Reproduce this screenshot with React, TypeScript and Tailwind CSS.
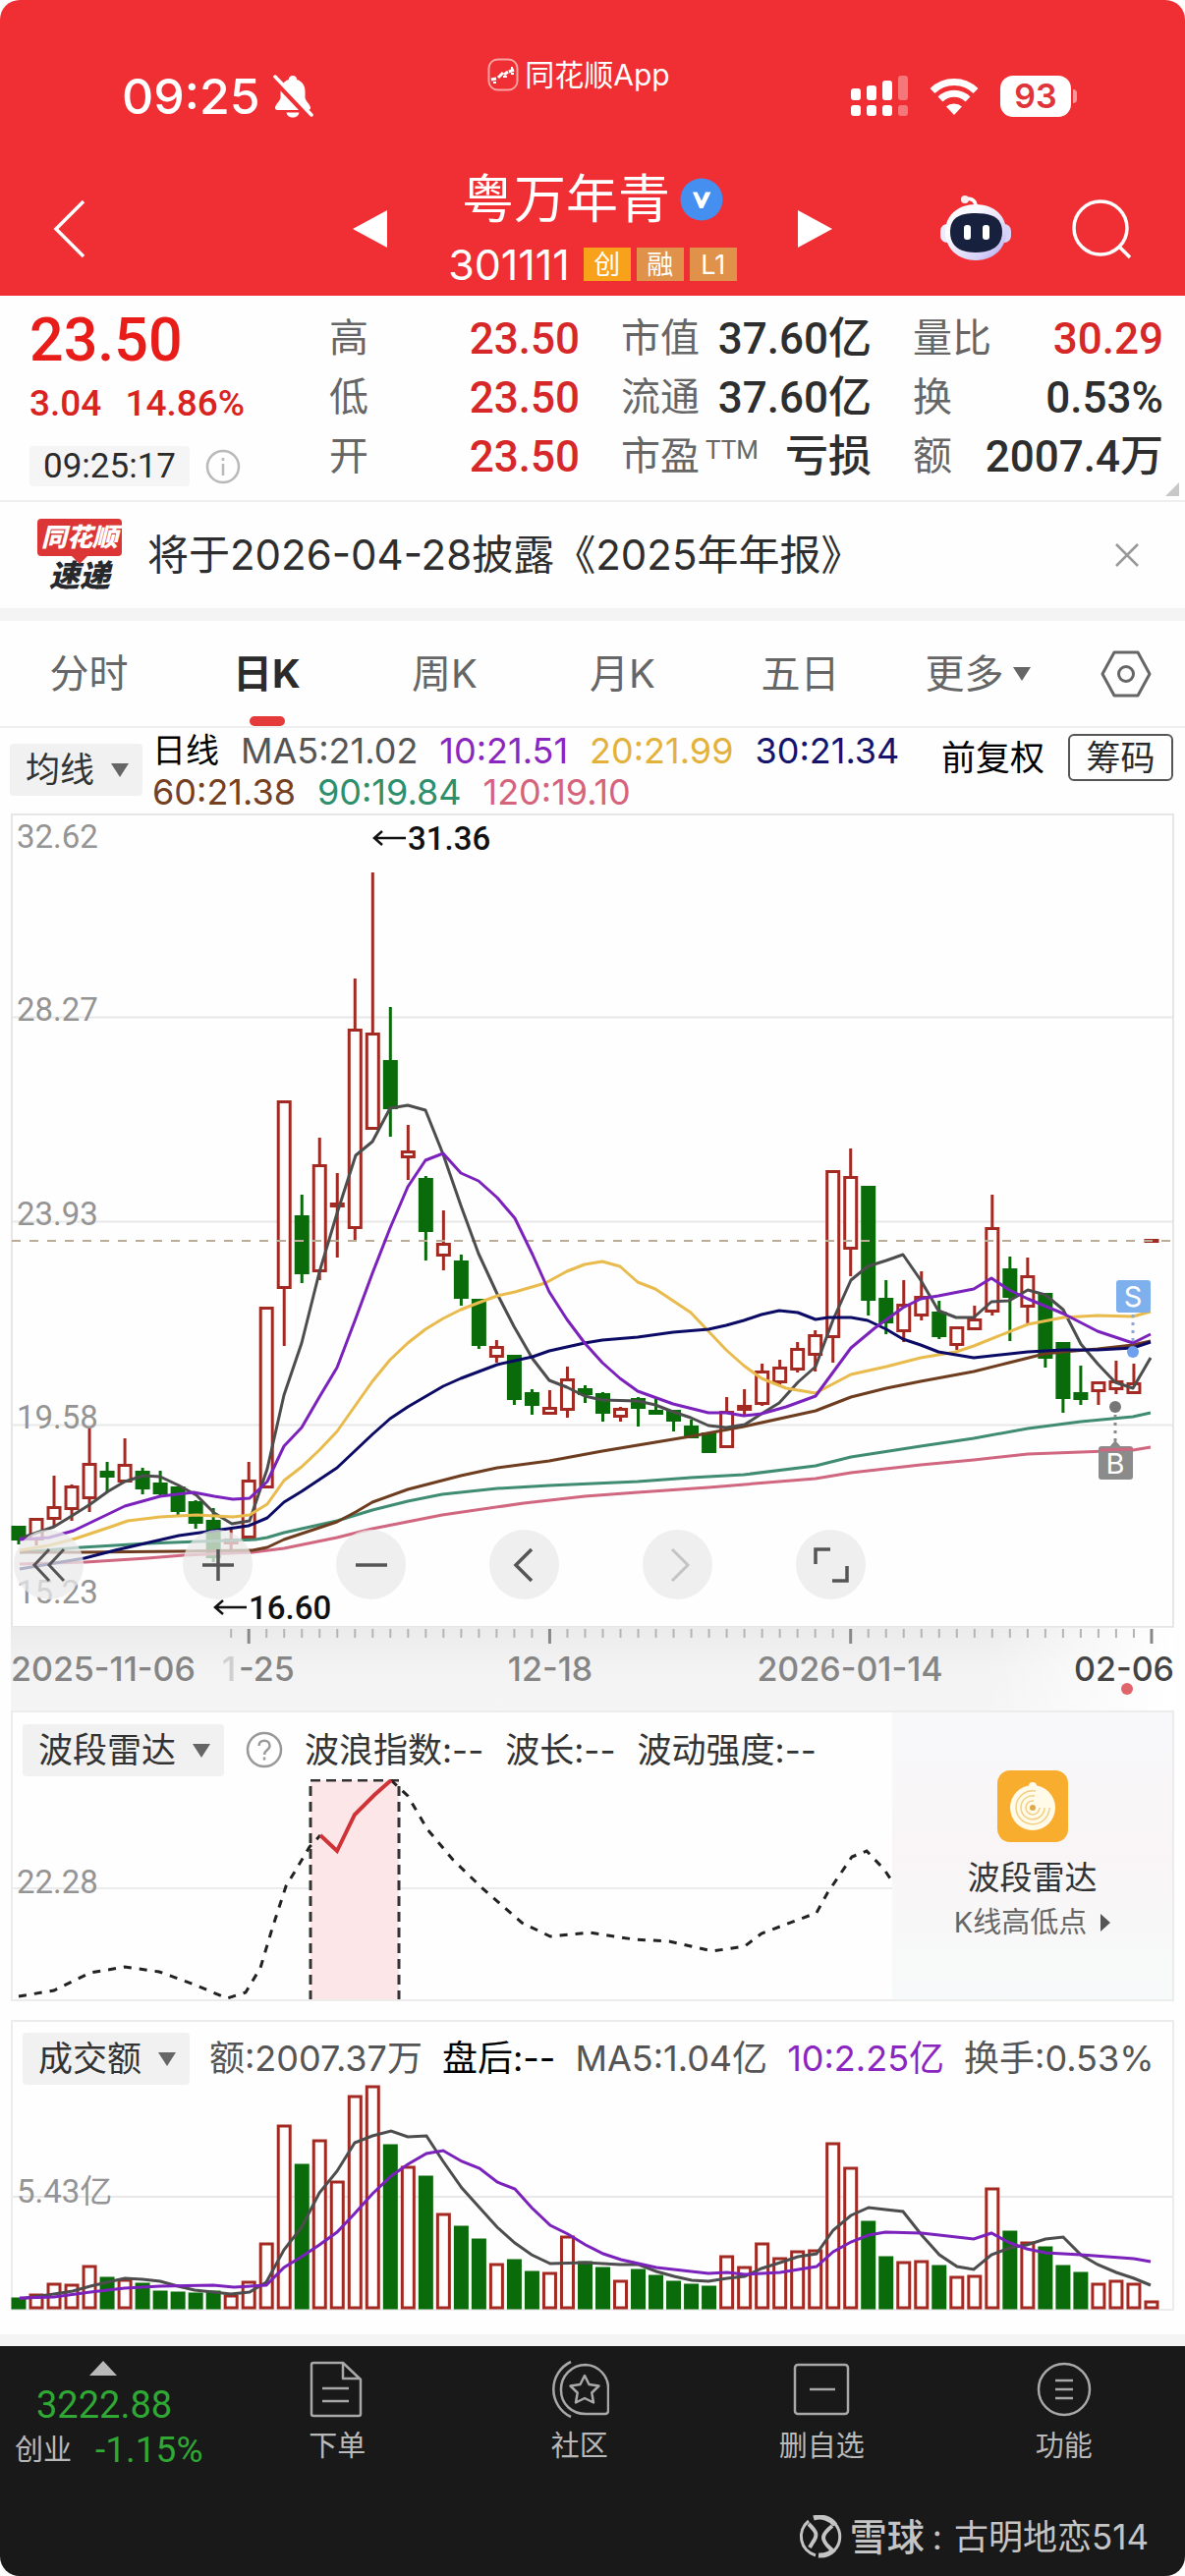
import { type ReactNode } from "react";

type Candle = {
  up: boolean;
  top: number;
  bottom: number;
  high: number;
  low: number;
};

const RED = "#a32a22";
const GREEN = "#0a6b0a";
const FIRST_X = 19;
const STEP = 18.015;

const slotX = (index: number) => FIRST_X + index * STEP;

function candle(kind: "r" | "g", top: number, bottom: number, high = top, low = bottom): Candle {
  return { up: kind === "r", top, bottom, high, low };
}

const candles: Candle[] = [
  candle("g", 1554, 1567, 1554, 1572),
  candle("r", 1546, 1567, 1546, 1573),
  candle("r", 1534, 1546, 1502, 1554),
  candle("r", 1513, 1536, 1511, 1548),
  candle("r", 1490, 1525, 1453, 1539),
  candle("g", 1498, 1503, 1488, 1518),
  candle("r", 1491, 1508, 1464, 1508),
  candle("g", 1498, 1515, 1494, 1521),
  candle("g", 1510, 1520, 1497, 1523),
  candle("g", 1514, 1538, 1514, 1542),
  candle("g", 1529, 1550, 1527, 1556),
  candle("g", 1548, 1585, 1535, 1590),
  candle("r", 1567, 1571, 1557, 1578),
  candle("r", 1507, 1565, 1488, 1565),
  candle("r", 1331, 1514),
  candle("r", 1121, 1311, 1121, 1370),
  candle("g", 1238, 1296, 1216, 1306),
  candle("r", 1186, 1294, 1158, 1303),
  candle("r", 1225, 1228, 1194, 1280),
  candle("r", 1048, 1250, 996, 1263),
  candle("r", 1052, 1149, 888, 1149),
  candle("g", 1080, 1128, 1025, 1157),
  candle("r", 1172, 1178, 1145, 1201),
  candle("g", 1200, 1253, 1197, 1283),
  candle("r", 1266, 1278, 1232, 1293),
  candle("g", 1284, 1321, 1277, 1329),
  candle("g", 1323, 1369, 1323, 1373),
  candle("r", 1371, 1381, 1364, 1387),
  candle("g", 1380, 1424, 1380, 1430),
  candle("g", 1418, 1430, 1414, 1440),
  candle("r", 1433, 1439, 1415, 1439),
  candle("r", 1404, 1435, 1391, 1443),
  candle("g", 1414, 1419, 1410, 1428),
  candle("g", 1419, 1438, 1417, 1447),
  candle("r", 1434, 1442, 1432, 1447),
  candle("g", 1424, 1433, 1422, 1452),
  candle("g", 1436, 1439, 1423, 1440),
  candle("g", 1436, 1446, 1436, 1457),
  candle("g", 1452, 1463, 1445, 1463),
  candle("g", 1459, 1478),
  candle("r", 1437, 1473, 1422, 1473),
  candle("r", 1431, 1435, 1414, 1440),
  candle("r", 1396, 1429, 1388, 1431),
  candle("r", 1392, 1407, 1384, 1409),
  candle("r", 1373, 1394, 1366, 1397),
  candle("r", 1359, 1379, 1354, 1396),
  candle("r", 1192, 1361, 1192, 1387),
  candle("r", 1198, 1271, 1169, 1299),
  candle("g", 1208, 1323, 1208, 1339),
  candle("g", 1322, 1346, 1303, 1358),
  candle("r", 1328, 1355, 1303, 1366),
  candle("r", 1320, 1339, 1294, 1344),
  candle("g", 1336, 1360, 1324, 1363),
  candle("r", 1351, 1369, 1351, 1374),
  candle("r", 1343, 1353, 1329, 1353),
  candle("r", 1250, 1335, 1216, 1339),
  candle("g", 1292, 1320, 1279, 1365),
  candle("r", 1299, 1330, 1280, 1348),
  candle("g", 1317, 1382, 1317, 1392),
  candle("g", 1367, 1423, 1366, 1438),
  candle("g", 1418, 1424, 1390, 1430),
  candle("r", 1407, 1416, 1407, 1430),
  candle("r", 1406, 1414, 1385, 1419),
  candle("r", 1408, 1418, 1388, 1418),
  candle("r", 1262, 1264),
];

const averages = [
  {
    color: "#d0667f",
    points:
      "20,1592 87,1590 150,1586 187,1583 257,1580 289,1576 343,1565 379,1556 450,1542 533,1530 595,1523 649,1519 721,1514 830,1505 866,1499 937,1491 991,1486 1046,1480 1100,1478 1153,1476 1171,1473",
  },
  {
    color: "#3f8c72",
    points:
      "20,1580 83,1575 150,1571 203,1569 260,1567 272,1565 289,1560 343,1548 379,1537 415,1528 450,1521 506,1515 559,1512 649,1508 703,1504 757,1501 830,1492 866,1483 937,1472 991,1464 1046,1454 1100,1447 1153,1442 1171,1438",
  },
  {
    color: "#6e3c1e",
    points:
      "20,1580 83,1580 182,1579 257,1578 272,1575 289,1567 307,1561 343,1549 362,1539 379,1529 415,1516 469,1502 506,1494 559,1487 613,1477 667,1468 703,1462 757,1452 830,1436 866,1422 902,1413 937,1406 991,1396 1027,1387 1063,1378 1082,1376 1117,1373 1153,1369 1171,1365",
  },
  {
    color: "#4d4d4d",
    points:
      "20,1566 55,1554 73,1543 92,1531 110,1518 127,1508 146,1502 163,1503 182,1512 200,1522 218,1540 236,1551 254,1548 272,1495 289,1420 307,1367 325,1295 343,1235 362,1176 379,1162 397,1128 415,1125 433,1130 451,1175 469,1227 487,1276 506,1317 523,1350 542,1383 559,1405 577,1412 595,1421 613,1425 649,1426 667,1430 685,1437 703,1443 721,1451 739,1453 758,1450 775,1439 793,1428 812,1407 830,1391 848,1343 866,1303 883,1289 902,1283 919,1277 937,1303 955,1334 973,1341 991,1341 1009,1325 1027,1324 1046,1313 1064,1318 1082,1333 1100,1368 1117,1388 1135,1407 1153,1413 1171,1382",
  },
  {
    color: "#e8bb4c",
    points:
      "20,1578 50,1573 77,1566 113,1554 130,1548 163,1544 200,1542 237,1544 254,1542 272,1531 289,1507 307,1493 325,1476 343,1457 379,1406 397,1384 415,1367 433,1353 451,1342 469,1333 487,1326 506,1319 524,1315 555,1306 577,1294 595,1287 613,1284 631,1289 649,1305 667,1312 703,1336 721,1355 739,1374 757,1390 775,1403 800,1413 830,1418 866,1399 902,1391 937,1382 973,1376 991,1370 1046,1348 1082,1341 1117,1339 1153,1340 1171,1335",
  },
  {
    color: "#0b0b66",
    points:
      "20,1597 86,1586 117,1578 143,1572 182,1563 218,1558 253,1553 272,1545 289,1529 307,1518 325,1506 343,1494 379,1460 397,1444 415,1432 451,1411 469,1403 506,1389 542,1381 559,1375 577,1371 595,1367 613,1364 649,1361 685,1356 721,1353 739,1349 757,1344 775,1338 793,1334 812,1336 830,1343 843,1341 866,1341 883,1344 902,1353 919,1363 937,1369 955,1376 991,1382 1046,1376 1082,1374 1117,1374 1153,1372 1171,1366",
  },
  {
    color: "#7a22bb",
    points:
      "20,1567 50,1565 75,1558 100,1546 127,1533 163,1523 197,1519 218,1523 237,1526 254,1525 272,1508 289,1472 307,1453 325,1422 343,1392 362,1342 379,1296 397,1250 415,1208 433,1181 451,1174 469,1194 487,1202 506,1219 524,1240 542,1277 559,1315 577,1343 595,1367 613,1387 631,1403 649,1416 685,1429 721,1438 739,1438 757,1441 775,1439 800,1432 830,1421 866,1372 890,1352 919,1331 937,1322 955,1319 991,1312 1009,1301 1027,1313 1046,1322 1082,1337 1117,1355 1153,1367 1171,1358",
  },
];

const priceLabels = [
  { text: "32.62", y: 863 },
  { text: "28.27", y: 1039 },
  { text: "23.93", y: 1247 },
  { text: "19.58", y: 1454 },
  { text: "15.23", y: 1632 },
];

const volumeTops = [
  2340, 2336, 2325, 2326, 2307, 2319, 2321, 2325, 2333, 2334, 2335, 2333, 2337, 2323, 2284, 2164,
  2204, 2179, 2221, 2134, 2124, 2184, 2206, 2216, 2254, 2267, 2280, 2305, 2301, 2313, 2314, 2277,
  2303, 2309, 2322, 2311, 2317, 2323, 2326, 2328, 2297, 2308, 2284, 2299, 2292, 2291, 2182, 2207,
  2262, 2298, 2303, 2302, 2307, 2318, 2317, 2228, 2272, 2283, 2288, 2307, 2314, 2325, 2322, 2325,
  2343,
];

const volumeMa5 =
  "20,2340 55,2335 74,2332 92,2327 109,2323 127,2319 145,2320 163,2322 181,2327 198,2331 217,2333 235,2335 254,2333 271,2323 289,2290 307,2267 325,2232 343,2210 361,2181 379,2174 398,2169 415,2175 434,2174 451,2200 470,2227 488,2247 506,2267 524,2283 541,2295 560,2304 596,2303 631,2305 650,2305 668,2312 686,2317 704,2321 721,2322 740,2319 758,2317 775,2309 794,2303 812,2297 831,2294 848,2270 866,2255 884,2247 901,2249 919,2251 938,2275 956,2295 974,2307 991,2310 1009,2295 1028,2288 1045,2285 1064,2279 1082,2277 1100,2295 1117,2305 1136,2313 1154,2319 1171,2326";

const volumeMa10 =
  "20,2339 55,2338 92,2333 127,2329 163,2327 217,2326 238,2328 271,2326 289,2308 307,2297 325,2285 343,2272 361,2253 379,2233 398,2215 415,2203 434,2192 451,2189 470,2200 488,2207 506,2221 524,2228 541,2247 560,2265 578,2274 596,2285 614,2294 632,2300 668,2308 721,2314 740,2313 758,2315 794,2313 831,2307 848,2292 866,2282 884,2275 901,2272 938,2273 956,2275 991,2279 1009,2273 1028,2283 1045,2289 1064,2293 1100,2295 1154,2299 1171,2302";

const quotes = [
  [
    { label: "高", value: "23.50", red: true },
    { label: "低", value: "23.50", red: true },
    { label: "开", value: "23.50", red: true },
  ],
  [
    { label: "市值", value: "37.60亿" },
    { label: "流通", value: "37.60亿" },
    { label: "市盈", sup: "TTM", value: "亏损" },
  ],
  [
    { label: "量比", value: "30.29", red: true },
    { label: "换", value: "0.53%" },
    { label: "额", value: "2007.4万" },
  ],
];

const tabs = ["分时", "日K", "周K", "月K", "五日"];

function StatusBar() {
  return (
    <div className="grid grid-cols-[1fr_auto_1fr] pt-[54px]">
      <div className="flex h-[66px] items-center gap-3 pt-[22px] pl-[124px]">
        <span className="text-[50px] leading-[44px] font-medium">09:25</span>
        <svg viewBox="0 0 42 44" className="h-11 w-[42px]" aria-hidden="true">
          <path
            d="M21 1c-2.600 0-4.200 1.700-4.200 4C11 7 8.500 11.500 8.500 17v6c0 4-5.500 7-5.500 11 0 1.300 1 2 2.300 2h31.400c1.300 0 2.300-.700 2.300-2 0-4-5.500-7-5.500-11v-6c0-5.500-2.500-10-8.300-12 0-2.300-1.600-4-4.200-4zM14.500 38.500h13c-.5 3-3 5-6.500 5s-6-2-6.500-5z"
            fill="#fff"
          />
          <path d="M1 5l37 39" stroke="#f02f34" strokeWidth="5" />
          <path d="M3 2l37 39" stroke="#fff" strokeWidth="3.500" strokeLinecap="round" />
        </svg>
      </div>
      <div className="flex h-11 items-center gap-1.5 pr-7 text-[30px] leading-none">
        <svg viewBox="0 0 32 34" className="h-[34px] w-8" fill="none" aria-hidden="true">
          <rect x="1.500" y="1.500" width="29" height="31" rx="9" stroke="#f9a3a3" strokeWidth="2" />
          <path d="M4 22l5-1M11 20l5-5M17 17l4-3M22 14l5-2" stroke="#fff" strokeWidth="3" />
          <path d="M6 25h3M16 19h4M24 16h3M25 9v3" stroke="#fff" strokeWidth="2" />
        </svg>
        <span>同花顺App</span>
      </div>
      <div className="flex h-[66px] items-center justify-end gap-[22px] pt-[22px] pr-[110px]">
        <svg viewBox="0 0 58 42" className="h-[42px] w-[58px]" fill="#fff" aria-hidden="true">
          <rect x="0" y="13" width="10" height="12" rx="3" />
          <rect x="16" y="10" width="10" height="15" rx="3" />
          <rect x="32" y="5" width="10" height="20" rx="3" />
          <rect x="48" y="0" width="10" height="25" rx="3" opacity=".35" />
          <rect x="0" y="30" width="10" height="11" rx="3" />
          <rect x="16" y="30" width="10" height="11" rx="3" />
          <rect x="32" y="30" width="10" height="11" rx="3" />
          <rect x="48" y="30" width="10" height="11" rx="3" opacity=".35" />
        </svg>
        <svg viewBox="0 0 50 38" className="h-[38px] w-[50px]" fill="none" aria-hidden="true">
          <path d="M3 13.500a31.500 31.500 0 0 1 44 0" stroke="#fff" strokeWidth="7" />
          <path d="M11 22a20 20 0 0 1 28 0" stroke="#fff" strokeWidth="7" />
          <path d="M25 38l-8-8.500a12 12 0 0 1 16 0z" fill="#fff" />
        </svg>
        <div className="flex items-center gap-0.5">
          <span className="flex h-[42px] w-[72px] items-center justify-center rounded-[13px] bg-white text-[34px] leading-none font-semibold text-[#e0343a]">
            93
          </span>
          <span className="h-3.5 w-1 rounded-r-full bg-white/50" />
        </div>
      </div>
    </div>
  );
}

function StockHeader() {
  return (
    <header className="bg-[#f02f34] pb-[11px] text-white">
      <StatusBar />
      <div className="grid grid-cols-[1fr_auto_1fr] items-center pt-12">
        <div className="flex pt-2 pl-[54px]">
          <button type="button" aria-label="返回">
            <svg viewBox="0 0 34 60" className="h-[60px] w-[34px]" fill="none" stroke="#fff">
              <path d="M31 2L3 30l28 28" strokeWidth="3.500" />
            </svg>
          </button>
        </div>
        <div className="flex w-[488px] items-center justify-between">
          <button type="button" aria-label="上一只" className="pt-2">
            <svg viewBox="0 0 35 38" className="h-[38px] w-[35px]" fill="#fff">
              <path d="M0 19L35 0v38z" />
            </svg>
          </button>
          <div className="flex flex-col items-center gap-2.5">
            <h1 className="flex h-[70px] items-center gap-2.5 text-[53px] leading-none">
              粤万年青
              <svg viewBox="0 0 44 44" className="size-11" aria-hidden="true">
                <circle cx="22" cy="22" r="21.500" fill="#448ff0" />
                <path d="M13 14.500h4.500l4.500 9 4-9h5.500L23.500 31h-3.500z" fill="#fff" />
              </svg>
            </h1>
            <div className="flex h-[42px] items-center gap-1.5 text-[27px] leading-none">
              <span className="mr-2 text-[43px] leading-none">301111</span>
              <span className="flex h-[34px] w-12 items-center justify-center bg-[#f8a11b]">创</span>
              <span className="flex h-[34px] w-12 items-center justify-center bg-[#e0924a]">融</span>
              <span className="flex h-[34px] w-12 items-center justify-center bg-[#e0924a]">L1</span>
            </div>
          </div>
          <button type="button" aria-label="下一只" className="pt-2">
            <svg viewBox="0 0 35 38" className="h-[38px] w-[35px]" fill="#fff">
              <path d="M35 19L0 0v38z" />
            </svg>
          </button>
        </div>
        <div className="flex items-center justify-end gap-[62px] pt-2 pr-[55px]">
          <button type="button" aria-label="智能助手">
            <svg viewBox="0 0 72 68" className="h-[68px] w-[72px]">
              <defs>
                <linearGradient id="shell" x1="0" y1="0" x2="1" y2="1">
                  <stop offset=".3" stopColor="#fbfaff" />
                  <stop offset=".75" stopColor="#d5d0f8" />
                  <stop offset="1" stopColor="#a9a2ee" />
                </linearGradient>
              </defs>
              <path d="M36 11c0-5-3-8-10-8" fill="none" stroke="#fff" strokeWidth="3.500" />
              <circle cx="25" cy="4" r="4" fill="#fbeef2" />
              <rect x="0" y="29" width="14" height="19" rx="7" fill="#efecff" />
              <rect x="58" y="29" width="14" height="19" rx="7" fill="#d8d3fa" />
              <path
                d="M36 9c18 0 31 11 31 28S54 66 36 66 5 54 5 37 18 9 36 9z"
                fill="url(#shell)"
              />
              <path
                d="M36 18c17 0 27 5 27 19S53 58 36 58 10 51 10 37s9-19 26-19z"
                fill="#17203c"
              />
              <rect x="24" y="30" width="7" height="15" rx="3" fill="#fff" />
              <rect x="43" y="30" width="7" height="15" rx="3" fill="#fff" />
            </svg>
          </button>
          <button type="button" aria-label="搜索">
            <svg viewBox="0 0 60 62" className="h-[62px] w-[60px]" fill="none" stroke="#fff">
              <circle cx="29" cy="30" r="27" strokeWidth="3.500" />
              <path d="M48 49l11 11" strokeWidth="3.500" />
            </svg>
          </button>
        </div>
      </div>
    </header>
  );
}

function QuotePanel() {
  return (
    <section className="relative flex border-b-2 border-[#eeeeee] pt-3.5 pr-[22px] pb-3.5 pl-[30px] font-[Roboto,'Noto_Sans_CJK_SC',sans-serif]">
      <div className="w-[305px] text-[#d9231f]">
        <p className="text-[61px] leading-[62px] font-medium text-[#e81c19]">23.50</p>
        <p className="mt-2 flex gap-6 text-[37px] leading-[52px] font-medium">
          <span>3.04</span>
          <span>14.86%</span>
        </p>
        <div className="mt-[17px] flex items-center gap-4">
          <span className="flex h-[41px] items-center rounded-sm bg-[#f5f5f5] px-3.5 text-[35px] leading-none text-[#2b2b2b]">
            09:25:17
          </span>
          <svg viewBox="0 0 36 36" className="size-9" fill="none" stroke="#b9b9b9" aria-hidden="true">
            <circle cx="18" cy="18" r="16" strokeWidth="2.500" />
            <path d="M18 9v3M18 15v12" strokeWidth="2.500" />
          </svg>
        </div>
      </div>
      <div className="grid flex-1 grid-cols-3 gap-[42px]">
        {quotes.map((column, index) => (
          <dl key={index}>
            {column.map((item) => (
              <div key={item.label} className="flex h-[60px] items-center justify-between">
                <dt className="flex text-[40px] leading-[60px] text-[#666]">
                  {item.label}
                  {"sup" in item && (
                    <span className="ml-1.5 text-[26px] leading-[46px]">{item.sup}</span>
                  )}
                </dt>
                <dd
                  className={
                    "red" in item
                      ? "text-[44px] leading-[60px] font-medium text-[#d62828]"
                      : "text-[44px] leading-[60px] font-medium text-[#2e2e2e]"
                  }
                >
                  {item.value}
                </dd>
              </div>
            ))}
          </dl>
        ))}
      </div>
      <svg
        viewBox="0 0 14 14"
        className="absolute right-1.5 bottom-1 size-3.5"
        fill="#c8c8c8"
        aria-hidden="true"
      >
        <path d="M14 0v14H0z" />
      </svg>
    </section>
  );
}

function Notice() {
  return (
    <section className="flex h-[109px] items-center border-b border-[#f1f1f1] pr-[46px] pl-9">
      <div className="flex w-[90px] flex-col items-center italic">
        <span className="relative flex h-[38px] w-[86px] items-center justify-center rounded bg-[#dc3535] text-[26px] leading-none font-black text-white">
          同花顺
          <svg viewBox="0 0 16 8" className="absolute top-full h-2 w-4" fill="#dc3535">
            <path d="M0 0h16L8 8z" />
          </svg>
        </span>
        <span className="mt-1 text-[31px] leading-8 font-black text-[#26282c]">速递</span>
      </div>
      <p className="ml-6 flex-1 text-[42px] leading-none text-[#2e2e2e]">
        将于2026-04-28披露《2025年年报》
      </p>
      <button type="button" aria-label="关闭">
        <svg viewBox="0 0 26 26" className="size-[26px]" stroke="#999" strokeWidth="2.500">
          <path d="M2 2l22 22M24 2L2 24" />
        </svg>
      </button>
    </section>
  );
}

function Tabs() {
  return (
    <nav className="grid h-[109px] grid-cols-[repeat(6,minmax(0,181fr))_120fr] border-b-2 border-[#eeeeee] text-[40px] leading-none text-[#666]">
      {tabs.map((tab) =>
        tab === "日K" ? (
          <button
            key={tab}
            type="button"
            aria-current="page"
            className="relative flex items-center justify-center font-bold text-[#2b2b2b]"
          >
            {tab}
            <span className="absolute bottom-0 h-2.5 w-9 rounded-full bg-[#e53a3a]" />
          </button>
        ) : (
          <button key={tab} type="button" className="flex items-center justify-center">
            {tab}
          </button>
        ),
      )}
      <button type="button" className="flex items-center justify-center gap-2">
        更多
        <svg viewBox="0 0 20 14" className="h-3.5 w-5" fill="#666" aria-hidden="true">
          <path d="M1 0h18L10 14z" />
        </svg>
      </button>
      <button type="button" aria-label="设置" className="flex items-center justify-center">
        <svg viewBox="0 0 52 48" className="h-12 w-[52px]" fill="none" stroke="#666" strokeWidth="3">
          <path d="M14 2h24l12 22-12 22H14L2 24z" strokeLinejoin="round" />
          <circle cx="26" cy="24" r="7.500" />
        </svg>
      </button>
    </nav>
  );
}

function IndicatorSelect({ name, value }: { name: string; value: string }) {
  return (
    <div className="relative shrink-0 rounded-sm bg-[#f1f1f1] text-[#333]">
      <select
        aria-label={name}
        defaultValue={value}
        className="block h-[53px] appearance-none bg-transparent pr-12 pl-4 text-[35px] leading-[53px]"
      >
        <option>{value}</option>
      </select>
      <svg
        viewBox="0 0 18 14"
        className="pointer-events-none absolute top-5 right-3.5 h-3.5 w-[18px]"
        fill="#666"
        aria-hidden="true"
      >
        <path d="M0 0h18L9 14z" />
      </svg>
    </div>
  );
}

function AverageLegend() {
  return (
    <section className="flex h-[87px] items-start pr-3 pl-2.5">
      <div className="pt-4">
        <IndicatorSelect name="主图指标" value="均线" />
      </div>
      <div className="ml-2.5 flex-1 pt-0.5 text-[36px] leading-[42px] whitespace-nowrap">
        <p className="flex gap-[22px]">
          <span className="text-[34px] text-black">日线</span>
          <span className="text-[#555]">MA5:21.02</span>
          <span className="text-[#8a25c0]">10:21.51</span>
          <span className="text-[#e3b13c]">20:21.99</span>
          <span className="text-[#14146e]">30:21.34</span>
        </p>
        <p className="flex gap-[22px]">
          <span className="text-[#74401f]">60:21.38</span>
          <span className="text-[#2d8f6c]">90:19.84</span>
          <span className="text-[#d5637c]">120:19.10</span>
        </p>
      </div>
      <button type="button" className="mt-1.5 h-12 text-[35px] leading-[48px] text-black">
        前复权
      </button>
      <button
        type="button"
        className="mt-1.5 ml-6 flex h-12 w-[107px] items-center justify-center rounded-md border-2 border-[#555] text-[35px] leading-none text-[#2b2b2b]"
      >
        筹码
      </button>
    </section>
  );
}

function ExtremeMark({ x, y, value }: { x: number; y: number; value: string }) {
  return (
    <g>
      <path
        d={`M${x + 33} ${y}H${x + 1}M${x + 9} ${y - 7}L${x + 1} ${y}l8 7`}
        fill="none"
        stroke="#111"
        strokeWidth="2.500"
      />
      <text x={x + 35} y={y + 12} fontSize="33" fontWeight="500" fill="#111">
        {value}
      </text>
    </g>
  );
}

function RoundButton({ label, children }: { label: string; children: ReactNode }) {
  return (
    <button
      type="button"
      aria-label={label}
      className="flex size-[71px] items-center justify-center rounded-full bg-[#e9e9e9]/75"
    >
      <svg viewBox="0 0 36 36" className="size-9" fill="none" stroke="#555" strokeWidth="3.500">
        {children}
      </svg>
    </button>
  );
}

function CandleChart() {
  return (
    <section className="relative">
      <svg viewBox="0 828 1206 915" className="block w-full" role="img" aria-label="日K线">
        <defs>
          <linearGradient id="axis" x1="0" y1="0" x2="0" y2="1">
            <stop offset="0" stopColor="#ebebeb" />
            <stop offset=".5" stopColor="#f3f3f3" />
            <stop offset="1" stopColor="#f5f5f5" />
          </linearGradient>
          <linearGradient id="axisFade">
            <stop offset="0" stopColor="#fff" stopOpacity="0" />
            <stop offset="1" stopColor="#fff" />
          </linearGradient>
        </defs>
        <rect x="12" y="829" width="1182" height="827" fill="none" stroke="#e6e6e6" strokeWidth="2" />
        <path d="M12 1035.500H1193M12 1243.500H1193M12 1450.500H1193" stroke="#e8e8e8" strokeWidth="2" />

        {candles.map((item, index) => {
          const x = slotX(index);
          const color = item.up ? RED : GREEN;
          return (
            <g key={index} stroke={color}>
              <path
                d={`M${x} ${item.high}V${item.top}M${x} ${item.bottom}V${item.low}`}
                strokeWidth="3"
              />
              <rect
                x={x - 6}
                y={item.top + 0.5}
                width="12"
                height={Math.max(item.bottom - item.top - 1, 1)}
                fill={item.up ? "#fff" : color}
                strokeWidth="3"
              />
            </g>
          );
        })}

        <path d="M12 1263H1193" stroke="#b9ad98" strokeWidth="2" strokeDasharray="9 9" />
        {averages.map((line) => (
          <polyline
            key={line.color}
            points={line.points}
            fill="none"
            stroke={line.color}
            strokeWidth="3"
            strokeLinejoin="round"
          />
        ))}

        <g fontFamily="Inter, sans-serif">
          <path d="M1153 1338v32" stroke="#8ea6d0" strokeWidth="3" strokeDasharray="3 5" />
          <circle cx="1153" cy="1376" r="6" fill="#6ea0ee" />
          <rect x="1136" y="1303" width="35" height="33" rx="3" fill="#7fb0ee" />
          <text x="1153" y="1330" fontSize="29" textAnchor="middle" fill="#fff">
            S
          </text>
          <circle cx="1135" cy="1432" r="6" fill="#777" />
          <path d="M1135 1440v28" stroke="#888" strokeWidth="3" strokeDasharray="3 5" />
          <path d="M1135 1466l6 7h-12z" fill="#888" />
          <rect x="1118" y="1472" width="35" height="34" rx="3" fill="#8b8b8b" />
          <path d="M1119 1476l34-1" stroke="#d0667f" strokeWidth="3" />
          <text x="1135" y="1500" fontSize="29" textAnchor="middle" fill="#fff">
            B
          </text>
        </g>

        <g fontFamily="Roboto, sans-serif">
          {priceLabels.map((label) => (
            <text key={label.text} x="17" y={label.y} fontSize="33" fill="#949494">
              {label.text}
            </text>
          ))}
          <ExtremeMark x={380} y={853} value="31.36" />
          <ExtremeMark x={218} y={1636} value="16.60" />
        </g>

        <rect x="11" y="1656" width="1184" height="85" fill="url(#axis)" />
        <rect x="1000" y="1657" width="195" height="85" fill="url(#axisFade)" />
        <path d="M11 1742H1195" stroke="#ececec" strokeWidth="2" />
        {candles.map((_, index) => {
          if (index < 12) return null;
          const long = index % 17 === 13;
          return (
            <path
              key={index}
              d={`M${slotX(index)} 1658v${long ? 15 : 9}`}
              stroke={long ? "#888" : "#b5b5b5"}
              strokeWidth={long ? 3 : 2}
            />
          );
        })}
        <g fontSize="34" fontWeight="500" fill="#858585">
          <text x="11" y="1711">
            2025-11-06
          </text>
          <text x="226" y="1711" fill="#cfcfcf">
            1
          </text>
          <text x="243" y="1711">
            -25
          </text>
          <text x="560" y="1711" textAnchor="middle">
            12-18
          </text>
          <text x="865" y="1711" textAnchor="middle">
            2026-01-14
          </text>
          <text x="1195" y="1711" textAnchor="end" fill="#444">
            02-06
          </text>
        </g>
        <circle cx="1147" cy="1719" r="6" fill="#e0656a" />
      </svg>
      <div className="absolute inset-x-0 bottom-[115px] flex gap-[85px] pl-3.5">
        <div className="mr-4">
          <RoundButton label="最早">
            <path d="M18 2L3 18l15 16M33 2L18 18l15 16" strokeWidth="3" />
          </RoundButton>
        </div>
        <RoundButton label="放大">
          <path d="M18 2v32M2 18h32" />
        </RoundButton>
        <RoundButton label="缩小">
          <path d="M2 18h32" />
        </RoundButton>
        <RoundButton label="左移">
          <path d="M25 2L9 18l16 16" />
        </RoundButton>
        <RoundButton label="右移">
          <path d="M12 2l16 16-16 16" stroke="#c4c4c4" strokeWidth="3" />
        </RoundButton>
        <RoundButton label="全屏">
          <path d="M2 17V2h15M34 19v15H19" />
        </RoundButton>
      </div>
    </section>
  );
}

function WavePanel() {
  return (
    <section className="mx-[11px] flex border-2 border-t-0 border-[#ececec]">
      <div className="min-w-0 flex-1">
        <div className="flex h-[68px] items-center gap-[22px] pt-2 pl-2.5 text-[35px] leading-none whitespace-nowrap text-[#333]">
          <IndicatorSelect name="副图指标一" value="波段雷达" />
          <svg viewBox="0 0 38 38" className="size-[38px] shrink-0" fill="none" stroke="#999" aria-hidden="true">
            <circle cx="19" cy="19" r="17" strokeWidth="2.500" />
            <path
              d="M13.500 15c0-7 11-7 11 0 0 4.500-5.500 4-5.500 9M19 26.500v3"
              strokeWidth="2.500"
            />
          </svg>
          <span>波浪指数:--</span>
          <span>波长:--</span>
          <span>波动强度:--</span>
        </div>
        <svg viewBox="13 1811 895 224" className="block w-full" role="img" aria-label="波段雷达">
          <path d="M13 1922H908" stroke="#ececec" strokeWidth="2" />
          <rect x="316" y="1812" width="90" height="226" fill="#fde6e8" />
          <path
            d="M316 2036V1812H406V2036"
            fill="none"
            stroke="#333"
            strokeWidth="3"
            strokeDasharray="10 6"
          />
          <g fill="none" stroke="#222" strokeWidth="3" strokeDasharray="8 8">
            <polyline points="19,2032 55,2026 92,2008 127,2002 162,2007 198,2020 231,2034 250,2028 265,2003 277,1963 291,1920 315,1880 326,1868" />
            <polyline points="398,1812 415,1828 435,1862 461,1893 492,1923 531,1957 560,1971 600,1967 645,1974 681,1976 725,1986 758,1981 775,1968 815,1953 831,1947 842,1927 867,1890 882,1884 900,1903 908,1915" />
          </g>
          <polyline
            points="326,1868 343,1884 361,1847 381,1827 398,1812"
            fill="none"
            stroke="#cf3338"
            strokeWidth="4"
          />
          <text x="17" y="1927" fontSize="33" fill="#949494" fontFamily="Roboto, sans-serif">
            22.28
          </text>
        </svg>
      </div>
      <a
        href="#radar"
        className="flex w-[285px] flex-col items-center bg-gradient-to-b from-[#f8f8fa] via-[#f9f5f6] to-[#f7fafa] pt-[59px]"
      >
        <svg viewBox="0 0 72 73" className="h-[73px] w-[72px]" aria-hidden="true">
          <rect width="72" height="73" rx="13" fill="#f9ad2e" />
          <circle cx="36" cy="38" r="23" fill="#fffbe8" />
          <circle cx="36" cy="16" r="4" fill="#fffbe8" />
          <g fill="none" stroke="#f3cf85" strokeWidth="1.500">
            <path d="M53 38a17 17 0 1 1-14-17" />
            <path d="M48 38a12 12 0 1 1-10-12" />
            <path d="M43 38a7 7 0 1 1-6-7" />
          </g>
          <circle cx="36" cy="38" r="3" fill="#e0a84a" />
        </svg>
        <span className="mt-[18px] text-[33px] leading-9 text-[#333]">波段雷达</span>
        <span className="mt-2.5 flex items-center gap-3.5 text-[29px] leading-9 text-[#666]">
          K线高低点
          <svg viewBox="0 0 10 18" className="h-[18px] w-2.5" fill="#555" aria-hidden="true">
            <path d="M0 0l10 9-10 9z" />
          </svg>
        </span>
      </a>
    </section>
  );
}

function VolumePanel() {
  return (
    <section className="mx-[11px] mt-[19px] mb-6 border-2 border-[#ececec]">
      <div className="flex h-[66px] items-center gap-5 pt-2 pl-2.5 text-[36px] leading-none whitespace-nowrap text-[#555]">
        <IndicatorSelect name="副图指标二" value="成交额" />
        <span>额:2007.37万</span>
        <span className="text-black">盘后:--</span>
        <span>MA5:1.04亿</span>
        <span className="text-[#8a25c0]">10:2.25亿</span>
        <span>换手:0.53%</span>
      </div>
      <svg
        viewBox="13 2124 1180 226"
        className="block w-full overflow-visible"
        role="img"
        aria-label="成交额"
      >
        <path d="M13 2236H1193" stroke="#e8e8e8" strokeWidth="2" />
        {volumeTops.map((top, index) => {
          const up = candles[index].up;
          return (
            <rect
              key={index}
              x={slotX(index) - 6}
              y={top}
              width="12"
              height={2349 - top}
              fill={up ? "#fff" : GREEN}
              stroke={up ? RED : GREEN}
              strokeWidth="3"
            />
          );
        })}
        <polyline points={volumeMa5} fill="none" stroke="#4d4d4d" strokeWidth="3" />
        <polyline points={volumeMa10} fill="none" stroke="#7a22bb" strokeWidth="3" />
        <text
          x="17"
          y="2242"
          fontSize="33"
          fill="#949494"
          fontFamily="Roboto, 'Noto Sans CJK SC', sans-serif"
        >
          5.43亿
        </text>
      </svg>
    </section>
  );
}

function NavItem({ label, children }: { label: string; children: ReactNode }) {
  return (
    <button type="button" className="flex flex-1 flex-col items-center gap-2.5 pt-3.5 text-[29px] leading-9">
      <svg
        viewBox="0 0 60 60"
        className="size-[60px]"
        fill="none"
        stroke="#a8a8a8"
        strokeWidth="2.500"
        strokeLinejoin="round"
      >
        {children}
      </svg>
      {label}
    </button>
  );
}

function BottomBar() {
  return (
    <footer className="flex h-[234px] flex-col justify-between bg-[#191919] text-[#b9b9b9]">
      <nav className="flex">
        <a
          href="#index"
          className="flex w-[220px] flex-col pt-[15px] pl-[15px] font-[Roboto,'Noto_Sans_CJK_SC',sans-serif]"
        >
          <svg viewBox="0 0 28 15" className="ml-[76px] h-[15px] w-7" fill="#b9b9b9" aria-hidden="true">
            <path d="M14 0l14 15H0z" />
          </svg>
          <span className="mt-2 pl-[22px] text-[38px] leading-[44px] text-[#2fa834]">3222.88</span>
          <span className="mt-0.5 flex items-center gap-6 text-[29px] leading-[44px]">
            创业
            <span className="text-[37px] text-[#2fa834]">-1.15%</span>
          </span>
        </a>
        <NavItem label="下单">
          <path d="M36 3H6a2 2 0 0 0-2 2v50a2 2 0 0 0 2 2h46a2 2 0 0 0 2-2V20zM36 3v16h17" />
          <path d="M15 29h27M15 42h27" />
        </NavItem>
        <NavItem label="社区">
          <path d="M36 5a25 25 0 0 0-25 26c0 14 11 24 25 24h20a3 3 0 0 0 3-3V30A24 24 0 0 0 36 5z" />
          <path d="M21 2a31 31 0 0 0 0 56" />
          <path d="M35 16l4.500 9 10 1.500-7.200 7 1.700 10L35 39l-9 4.500 1.700-10-7.200-7 10-1.500z" />
        </NavItem>
        <NavItem label="删自选">
          <rect x="3" y="5" width="54" height="50" rx="3" />
          <path d="M18 30h26" />
        </NavItem>
        <NavItem label="功能">
          <circle cx="30" cy="30" r="26" />
          <path d="M21 21h18M21 30h18M21 39h18" />
        </NavItem>
      </nav>
      <p className="mb-[18px] flex h-11 items-center justify-end pr-[37px] text-[35px] leading-none text-[#c4c4c4]">
        <svg viewBox="0 0 44 44" className="mr-2 size-11" fill="none" stroke="#c4c4c4" aria-hidden="true">
          <path d="M17 41A20 20 0 0 1 10 6" strokeWidth="3" />
          <path d="M15 3a20 20 0 0 1 22 7" strokeWidth="5" />
          <path d="M37 9a20 20 0 0 1-1 27" strokeWidth="3" />
          <path d="M20 41a20 20 0 0 0 16-6" strokeWidth="5" />
          <path d="M10 9c8 8 10 11 4 19l-3 5" strokeWidth="4" />
          <path d="M34 11c-11 9-11 13-5 20l4 4" strokeWidth="4" />
        </svg>
        <span className="text-[38px] font-medium">雪球</span>
        <span className="mx-2">:</span>
        <span className="ml-1">古明地恋514</span>
      </p>
    </footer>
  );
}

export default function App() {
  return (
    <div className="w-full bg-white font-[Inter,'Noto_Sans_CJK_SC',sans-serif]">
      <main className="overflow-hidden rounded-[20px] bg-[#fefefe]">
        <StockHeader />
        <QuotePanel />
        <Notice />
        <div className="h-3 bg-[#f4f4f4]" />
        <Tabs />
        <AverageLegend />
        <CandleChart />
        <WavePanel />
        <VolumePanel />
        <div className="h-3 bg-[#f4f4f4]" />
        <BottomBar />
      </main>
    </div>
  );
}
